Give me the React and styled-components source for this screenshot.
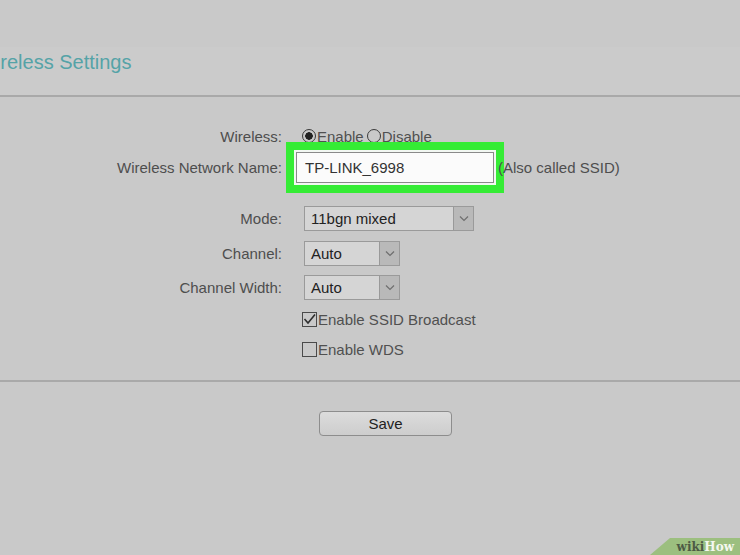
import styled, { createGlobalStyle } from "styled-components";

const Global = createGlobalStyle`
  html, body {
    margin: 0;
    padding: 0;
    background: #c9c9c9;
    font-family: "Liberation Sans", Arial, sans-serif;
  }
`;

const Page = styled.div`
  position: relative;
  width: 740px;
  height: 555px;
  overflow: hidden;
  background: #c9c9c9;
`;

const Header = styled.div`
  margin-top: 47px;
  height: 48px;
  background: #cbcbcb;
  border-bottom: 2px solid #a9a9a9;
  overflow: hidden;
`;

const Title = styled.h1`
  margin: 0 0 0 -23px;
  padding-top: 3px;
  font-size: 20px;
  line-height: 24px;
  font-weight: normal;
  color: #55a3a7;
  white-space: nowrap;
`;

const Form = styled.div`
  display: flex;
  flex-direction: column;
  padding-top: 29px;
  padding-bottom: 21px;
  border-bottom: 2px solid #a9a9a9;
`;

const Row = styled.div`
  display: grid;
  grid-template-columns: 282px 1fr;
  column-gap: 14px;
  align-items: center;
  height: ${(p) => p.$h}px;
  margin-top: ${(p) => p.$top || 0}px;
  font-size: 15px;
  color: #4e4e4e;
`;

const Label = styled.div`
  text-align: right;
  white-space: nowrap;
`;

const Field = styled.div`
  display: flex;
  align-items: center;
  white-space: nowrap;
  padding-left: ${(p) => p.$pad || 0}px;
  color: #505050;
`;

const Radio = styled.span`
  display: inline-block;
  box-sizing: border-box;
  width: 14px;
  height: 14px;
  border-radius: 50%;
  border: 1.5px solid #3a3a3a;
  margin-right: 1px;
  margin-left: ${(p) => p.$ml || 0}px;
  background: ${(p) => (p.$on ? "radial-gradient(circle, #222 0 3.5px, transparent 4px)" : "transparent")};
`;

const NameInput = styled.div`
  box-sizing: border-box;
  width: 198px;
  height: 31px;
  border: 1px solid #8a8a8a;
  background: #fbfbfb;
  color: #333;
  padding-left: 8px;
  display: flex;
  align-items: center;
  font-size: 15px;
  box-shadow: 0 0 0 2px #f2f7f2, 0 0 0 10px #35ec35;
`;

const Hint = styled.span`
  position: relative;
  margin-left: 4px;
  color: #4e4e4e;
`;

const Select = styled.div`
  box-sizing: border-box;
  display: flex;
  width: ${(p) => p.$w}px;
  height: 25px;
  border: 1px solid #9a9a9a;
  background: #d5d5d5;
  color: #222;
  font-size: 15px;
`;

const SelectText = styled.div`
  flex: 1;
  display: flex;
  align-items: center;
  padding-left: 6px;
`;

const Arrow = styled.div`
  width: 19px;
  border-left: 1px solid #999;
  background: #b9b9b9;
  display: flex;
  align-items: center;
  justify-content: center;
`;

const Check = styled.span`
  box-sizing: border-box;
  width: 15px;
  height: 15px;
  border: 1.5px solid #4a4a4a;
  display: inline-flex;
  align-items: center;
  justify-content: center;
  margin-right: 1px;
`;

const Actions = styled.div`
  display: flex;
  padding: 29px 0 0 319px;
`;

const Button = styled.button`
  width: 133px;
  height: 25px;
  border: 1px solid #8d8d8d;
  border-radius: 4px;
  background: linear-gradient(#dcdcdc, #cdcdcd);
  font-family: "Liberation Sans", Arial, sans-serif;
  font-size: 15px;
  color: #222;
  padding: 0;
`;

const Badge = styled.div`
  position: absolute;
  right: 0;
  bottom: 0;
  width: 90px;
  height: 17px;
  background: #9cbf7f;
  clip-path: polygon(20px 0, 100% 0, 100% 100%, 0 100%);
  display: flex;
  align-items: center;
  justify-content: flex-end;
  padding-right: 6px;
  box-sizing: border-box;
  font-family: "DejaVu Serif", "Liberation Serif", serif;
  font-weight: bold;
  font-size: 12px;
`;

const Wiki = styled.span`
  color: #4d5a45;
`;

const How = styled.span`
  color: #f4f8f0;
`;

const Chevron = () => (
  <svg width="10" height="7" viewBox="0 0 10 7">
    <path d="M1 1.5 L5 5.5 L9 1.5" fill="none" stroke="#6f6f6f" strokeWidth="1.2" />
  </svg>
);

const Tick = () => (
  <svg width="13" height="13" viewBox="0 0 13 13">
    <path d="M1.5 6 L5 10 L12 1.5" fill="none" stroke="#2e2e2e" strokeWidth="1.6" />
  </svg>
);

const App = () => {
  return (
    <Page>
      <Global />
      <Header>
        <Title>Wireless Settings</Title>
      </Header>

      <Form>
        <Row $h={20}>
          <Label>Wireless:</Label>
          <Field $pad={6}>
            <Radio $on />Enable
            <Radio $ml={3} />Disable
          </Field>
        </Row>
        <Row $h={31} $top={6}>
          <Label>Wireless Network Name:</Label>
          <Field>
            <NameInput>TP-LINK_6998</NameInput>
            <Hint>(Also called SSID)</Hint>
          </Field>
        </Row>
        <Row $h={25} $top={23}>
          <Label>Mode:</Label>
          <Field $pad={8}>
            <Select $w={170}>
              <SelectText>11bgn mixed</SelectText>
              <Arrow><Chevron /></Arrow>
            </Select>
          </Field>
        </Row>
        <Row $h={25} $top={10}>
          <Label>Channel:</Label>
          <Field $pad={8}>
            <Select $w={96}>
              <SelectText>Auto</SelectText>
              <Arrow><Chevron /></Arrow>
            </Select>
          </Field>
        </Row>
        <Row $h={25} $top={9}>
          <Label>Channel Width:</Label>
          <Field $pad={8}>
            <Select $w={96}>
              <SelectText>Auto</SelectText>
              <Arrow><Chevron /></Arrow>
            </Select>
          </Field>
        </Row>
        <Row $h={20} $top={9}>
          <Label />
          <Field $pad={6}>
            <Check><Tick /></Check>Enable SSID Broadcast
          </Field>
        </Row>
        <Row $h={20} $top={10}>
          <Label />
          <Field $pad={6}>
            <Check />Enable WDS
          </Field>
        </Row>
      </Form>

      <Actions>
        <Button>Save</Button>
      </Actions>

      <Badge>
        <Wiki>wiki</Wiki>
        <How>How</How>
      </Badge>
    </Page>
  );
};

export default App;
